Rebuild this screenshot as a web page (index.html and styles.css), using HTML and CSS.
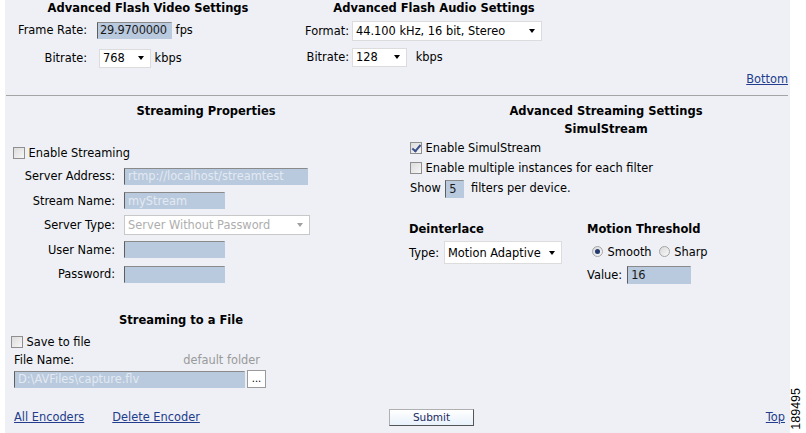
FILE: index.html
```html
<!DOCTYPE html>
<html>
<head>
  <meta charset="utf-8">
  <title>Encoder Settings</title>
  <link rel="stylesheet" href="styles.css">
</head>
<body>
<div class="page">
  <form class="panel">
    <div class="flash">
      <section class="video">
        <h3>Advanced Flash Video Settings</h3>
        <div class="rows">
          <label>Frame Rate:</label>
          <div><input class="txt w75 tight" value="29.9700000"> fps</div>
          <label>Bitrate:</label>
          <div><span class="drop w52 shift"><select><option>768</option></select></span> kbps</div>
        </div>
      </section>
      <section class="audio">
        <h3>Advanced Flash Audio Settings</h3>
        <div class="rows">
          <label>Format:</label>
          <div><span class="drop w190 tall"><select><option>44.100 kHz, 16 bit, Stereo</option></select></span></div>
          <label>Bitrate:</label>
          <div><span class="drop w55"><select><option>128</option></select></span> <span class="unit">kbps</span></div>
        </div>
      </section>
      <a href="#bottom" class="jump bottom">Bottom</a>
    </div>

    <div class="streaming">
      <section class="props">
        <h3>Streaming Properties</h3>
        <label class="check first"><input type="checkbox"> Enable Streaming</label>
        <div class="grid">
          <label>Server Address:</label>
          <div><input class="txt w184" value="rtmp://localhost/streamtest" disabled></div>
          <label>Stream Name:</label>
          <div><input class="txt w101" value="myStream" disabled></div>
          <label>Server Type:</label>
          <div><span class="drop w186 tall off"><select disabled><option>Server Without Password</option></select></span></div>
          <label>User Name:</label>
          <div><input class="txt w101" disabled></div>
          <label>Password:</label>
          <div><input class="txt w101" type="password" disabled></div>
        </div>

        <h3 class="to-file">Streaming to a File</h3>
        <label class="check save"><input type="checkbox"> Save to file</label>
        <div class="file-head">
          <span>File Name:</span>
          <span class="muted">default folder</span>
        </div>
        <div class="file-row">
          <input class="txt w231" value="D:\AVFiles\capture.flv" disabled>
          <button type="button" class="browse">...</button>
        </div>
      </section>

      <section class="adv">
        <h3 class="adv-title">Advanced Streaming Settings<br>SimulStream</h3>
        <label class="check line"><input type="checkbox" checked> Enable SimulStream</label>
        <label class="check line"><input type="checkbox"> Enable multiple instances for each filter</label>
        <div class="line">Show <input class="txt w19" value="5"> filters per device.</div>

        <div class="pair">
          <div class="deint">
            <h4>Deinterlace</h4>
            <div class="type-row">Type: <span class="drop w118 big"><select><option>Motion Adaptive</option></select></span></div>
          </div>
          <div class="motion">
            <h4>Motion Threshold</h4>
            <div class="radios">
              <label><input type="radio" name="mt" checked> Smooth</label>
              <label><input type="radio" name="mt"> Sharp</label>
            </div>
            <div class="value-row">Value: <input class="txt w64" value="16"></div>
          </div>
        </div>
      </section>
    </div>

    <div class="footer" id="bottom">
      <div class="links">
        <a href="#">All Encoders</a>
        <a href="#">Delete Encoder</a>
      </div>
      <button type="button" class="submit">Submit</button>
      <a href="#" class="jump top">Top</a>
    </div>
  </form>
  <span class="fig-id">189495</span>
</div>
</body>
</html>
```

FILE: styles.css
```css
* { box-sizing: border-box; }
body {
    margin: 0;
    padding: 0;
    background: #fff;
    font-family: 'DejaVu Sans', Verdana, sans-serif;
    font-size: 11.4px;
    color: #000;
}
.page {
    position: relative;
    width: 806px;
    height: 433px;
    overflow: hidden;
}
.panel {
    margin: 0 0 0 5px;
    width: 785px;
    height: 433px;
    background: #eef0f5;
}
h3, h4 {
    margin: 0;
    font-size: 11.5px;
    font-weight: bold;
    line-height: 16px;
}
label { white-space: nowrap; }
a { color: #233c8c; text-decoration: underline; }

/* inputs */
.txt {
    height: 17px;
    margin: 0;
    padding: 0 3px;
    font: inherit;
    color: #1a1a1a;
    background: #b9c9de;
    border: 1px solid;
    border-color: #8a8a8a #b9c9de #b9c9de #5e5e5e;
    vertical-align: middle;
}
.txt.tight { padding: 0 0 0 2px; letter-spacing: -0.2px; }
.txt:disabled { color: #e3e9f1; }
.w19 { width: 19px; height: 18px; }
.w64 { width: 64px; height: 18px; }
.w75 { width: 75px; }
.w101 { width: 101px; }
.w184 { width: 184px; }
.w231 { width: 231px; }

.drop {
    position: relative;
    display: inline-block;
    height: 19px;
    vertical-align: middle;
    background: #fff;
    border: 1px solid #dcdcdc;
}
.drop select {
    appearance: none;
    -webkit-appearance: none;
    width: 100%;
    height: 100%;
    margin: 0;
    padding: 0 0 0 3px;
    border: 0;
    background: transparent;
    font: inherit;
    color: #000;
    outline: none;
}
.drop::after {
    content: "";
    position: absolute;
    right: 6px;
    top: 50%;
    margin-top: -2px;
    border-left: 3.5px solid transparent;
    border-right: 3.5px solid transparent;
    border-top: 4px solid #000;
}
.drop.tall { height: 20px; }
.drop.big { height: 23px; }
.drop.off select { color: #8c8c8c; }
.drop.off::after { border-top-color: #a0a0a0; }
.drop.off { border-color: #c8c8c8; }
.shift { margin-left: 2px; }
.w52 { width: 52px; }
.w55 { width: 55px; }
.w118 { width: 118px; }
.w186 { width: 186px; }
.w190 { width: 190px; }

input[type=checkbox] {
    appearance: none;
    -webkit-appearance: none;
    position: relative;
    width: 12px;
    height: 12px;
    margin: 0;
    vertical-align: -2px;
    border: 1px solid #8f8f8f;
    background: linear-gradient(135deg, #dcdcdc, #f6f6f6);
}
input[type=checkbox]:checked::after {
    content: "";
    position: absolute;
    left: 3px;
    top: 0px;
    width: 3px;
    height: 7px;
    border: solid #3b4f8a;
    border-width: 0 2px 2px 0;
    transform: rotate(40deg);
}
input[type=radio] {
    appearance: none;
    -webkit-appearance: none;
    position: relative;
    width: 11px;
    height: 11px;
    margin: 0 1px 0 0;
    vertical-align: -1px;
    border: 1px solid #a5a5a5;
    border-radius: 50%;
    background: linear-gradient(135deg, #d8d8d8, #fafafa);
}
input[type=radio]:checked::after {
    content: "";
    position: absolute;
    left: 2px;
    top: 2px;
    width: 5px;
    height: 5px;
    border-radius: 50%;
    background: #233a6e;
}

/* top: flash settings */
.flash {
    display: flex;
    height: 96px;
    border-bottom: 1px solid #a5a5a5;
    margin-right: 2px;
    margin-left: 1px;
}
.flash section { text-align: center; }
.video { width: 284px; }
.audio { width: 288px; }
.rows {
    display: grid;
    align-items: center;
    text-align: left;
}
.video .rows {
    grid-template-columns: 81px auto;
    column-gap: 10px;
    grid-auto-rows: 20px;
    row-gap: 8px;
    margin-top: 4px;
}
.audio .rows {
    grid-template-columns: 59px auto;
    column-gap: 3px;
    grid-auto-rows: 20px;
    row-gap: 6px;
    margin-top: 5px;
}
.rows label { text-align: right; }
.unit { margin-left: 5px; }
.jump.bottom {
    margin-left: auto;
    align-self: flex-end;
    margin-bottom: 9px;
}

/* streaming */
.streaming { display: flex; }
.props {
    width: 402px;
    padding-left: 9px;
}
.props > h3 {
    margin-top: 7px;
    margin-left: -9px;
    text-align: center;
}
.check {
    display: block;
    line-height: 16px;
}
.check.first { margin-top: 26px; margin-left: -1px; }
.grid {
    display: grid;
    grid-template-columns: 96px auto;
    column-gap: 9px;
    grid-auto-rows: 20px;
    row-gap: 4.5px;
    align-items: center;
    margin-top: 5px;
    margin-left: 5px;
}
.grid label { text-align: right; }
.props > h3.to-file {
    margin-top: 28px;
    width: 352px;
}
.check.save { margin-top: 6px; margin-left: -3px; }
.file-head {
    display: flex;
    justify-content: space-between;
    width: 246px;
    line-height: 16px;
    margin-top: 2px;
}
.muted { color: #9a9a9a; }
.file-row {
    display: flex;
    align-items: center;
    gap: 2px;
    margin-top: 2px;
}
.browse {
    width: 19px;
    height: 18px;
    padding: 0;
    font: inherit;
    font-size: 10px;
    line-height: 10px;
    background: #fff;
    border: 1px solid #9a9a9a;
}

.adv {
    flex: 1;
    padding-left: 2px;
}
.adv-title {
    margin-top: 6px;
    padding-left: 13px;
    line-height: 18px;
    text-align: center;
}
.line {
    display: block;
    height: 20px;
    line-height: 20px;
    padding-left: 1px;
}
.line .txt { margin: 0 3px 0 1px; }
.pair {
    display: flex;
    margin-top: 23px;
}
.deint { width: 178px; }
.type-row {
    display: flex;
    align-items: center;
    gap: 5px;
    margin-top: 4px;
    height: 23px;
}
.radios {
    display: flex;
    gap: 7px;
    margin-top: 7px;
    padding-left: 5px;
    line-height: 16px;
}
.value-row {
    display: flex;
    align-items: center;
    gap: 5px;
    margin-top: 6px;
    height: 18px;
}

/* footer */
.footer {
    display: flex;
    align-items: center;
    height: 18px;
    margin-top: 20px;
    padding-left: 9px;
    padding-right: 5px;
}
.links {
    display: flex;
    gap: 28px;
    width: 375px;
}
.submit {
    width: 85px;
    height: 17px;
    padding: 0;
    font: inherit;
    font-size: 10.5px;
    color: #1c2a60;
    background: linear-gradient(#ffffff, #e8f1fb);
    border: 1px solid;
    border-color: #b0b0b0 #555 #555 #b0b0b0;
}
.jump.top { margin-left: auto; }

.fig-id {
    position: absolute;
    right: 3px;
    bottom: 3px;
    writing-mode: vertical-rl;
    transform: rotate(180deg);
    font-family: 'Liberation Sans', Arial, sans-serif;
    font-size: 12.5px;
    line-height: 13px;
}
```
